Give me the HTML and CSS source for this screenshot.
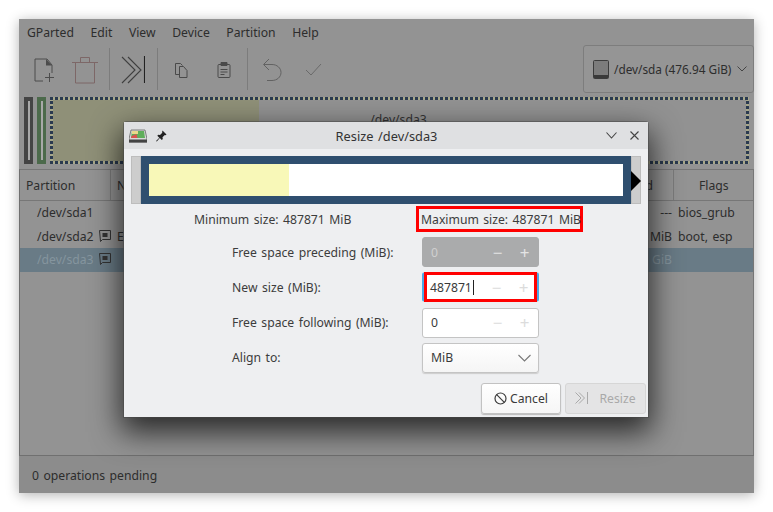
FILE: index.html
```html
<!DOCTYPE html>
<html lang="en">
<head>
<meta charset="utf-8">
<title>Resize /dev/sda3</title>
<link rel="stylesheet" href="styles.css">
</head>
<body>
<div class="window">
  <nav class="menubar">
    <span>GParted</span><span>Edit</span><span>View</span><span>Device</span><span>Partition</span><span>Help</span>
  </nav>
  <div class="toolbar">
    <div class="tools">
      <svg class="tool t-new" width="22" height="26" viewBox="0 0 22 26" fill="none" stroke="#4c4c4c" stroke-width="1"><path d="M10 24H2V2h12l5 6v8"/><path fill="#4c4c4c" stroke="none" d="M13 2l6 6.500h-6z"/><path d="M12 20.500h9M16.500 16v9"/></svg>
      <svg class="tool t-del" width="28" height="28" viewBox="0 0 28 28" fill="none" stroke="#7d6767" stroke-width="1"><path d="M1 6.500h26M9.500 6V1.500h9V6M4.500 7v20h19V7"/></svg>
      <i class="sep s1"></i>
      <svg class="tool t-res" width="24" height="28" viewBox="0 0 24 28" fill="none" stroke="#3f3f3f" stroke-width="1.100"><path d="M1 1l13 13L1 27M7 1l13 13L7 27"/><path stroke="#222" d="M23.500 0v27"/></svg>
      <i class="sep s2"></i>
      <svg class="tool t-copy" width="15" height="16" viewBox="0 0 15 16" fill="none" stroke="#4a4a4a"><path d="M5 12.500H1.500V1.500h5l2 2"/><path d="M5.500 4.500h4l3.500 4v7H5.500z"/></svg>
      <svg class="tool t-paste" width="14" height="16" viewBox="0 0 14 16" fill="none" stroke="#4a4a4a"><rect x="1" y="2.500" width="12" height="13" rx="1"/><path fill="#4a4a4a" d="M4 .5h6v3H4z"/><path d="M3.500 7.500h7M3.500 10h7M3.500 12.500h4"/></svg>
      <i class="sep s3"></i>
      <svg class="tool t-undo" width="21" height="24" viewBox="0 0 21 24" fill="none" stroke="#626262"><path d="M7 1L1.500 6.500 7 12"/><path d="M2 6.500h8c5 0 9 3.500 9 8s-4 8-9 8H5"/></svg>
      <svg class="tool t-ok" width="17" height="13" viewBox="0 0 17 13" fill="none" stroke="#6a6a6a"><path d="M1 7l5 5L16 1"/></svg>
    </div>
    <div class="device">
      <svg class="hdd" width="16" height="19" viewBox="0 0 16 19"><rect x=".5" y=".5" width="15" height="18" rx="1" fill="#7c7c7c" stroke="#3c3c3c"/><rect x="1" y="15" width="14" height="3" fill="#3a3a3a"/></svg>
      <span>/dev/sda (476.94 GiB)</span>
      <svg class="chev" width="10" height="6" viewBox="0 0 10 6" fill="none" stroke="#444"><path d="M.5.500L5 5 9.500.500"/></svg>
    </div>
  </div>
  <div class="diskmap">
    <div class="part p-a"><i></i></div>
    <div class="part p-b"><i></i></div>
    <div class="part-main">
      <div class="used"></div>
      <div class="free">/dev/sda3</div>
    </div>
  </div>
  <div class="table">
    <div class="thead">
      <div class="th c-part">Partition</div>
      <div class="th c-name">Name</div>
      <div class="th c-used">Used</div>
      <div class="th c-flags">Flags</div>
    </div>
    <div class="tr"><span class="c-part td">/dev/sda1</span><span class="c-mid"></span><span class="c-end td">---</span><span class="c-flags td">bios_grub</span></div>
    <div class="tr"><span class="c-part td">/dev/sda2 <svg class="key" width="12" height="12" viewBox="0 0 12 12"><path fill="none" stroke="#333" d="M.5.500h11v9h-8l-2 2z"/><rect x="3.500" y="3" width="5" height="4" fill="#333"/></svg></span><span class="c-mid td">EFI</span><span class="c-end td">MiB</span><span class="c-flags td">boot, esp</span></div>
    <div class="tr sel"><span class="c-part td">/dev/sda3 <svg class="key" width="12" height="12" viewBox="0 0 12 12"><path fill="none" stroke="#333" d="M.5.500h11v9h-8l-2 2z"/><rect x="3.500" y="3" width="5" height="4" fill="#333"/></svg></span><span class="c-mid"></span><span class="c-end td">GiB</span><span class="c-flags"></span></div>
  </div>
  <footer class="status">0 operations pending</footer>
</div>

<section class="dialog">
  <header class="titlebar">
    <svg class="appicon" width="18" height="14" viewBox="0 0 18 14"><path d="M2 1h14l2 9v3H0v-3z" fill="#d8d8d8" stroke="#555" stroke-width=".7"/><path d="M3 2h12l1 7H2z" fill="#5fae5a"/><path d="M3 2h6v3H3z" fill="#e9d98a"/><path d="M2.500 7l5-2 1 4H2z" fill="#d9534f"/><rect x="0" y="10.500" width="18" height="3" fill="#444"/></svg>
    <svg class="pin" width="11" height="12" viewBox="0 0 11 12"><path fill="#222" d="M6.500.5l4 4-1 .7-.7-.2L6.500 7.300l.3 1.700-1 1-2-2L.8 11.500 0 11l3.300-3.300-2-2 1-1 1.700.3 2.300-2.300-.2-.7z"/></svg>
    <h1>Resize /dev/sda3</h1>
    <svg class="wbtn" width="11" height="7" viewBox="0 0 11 7" fill="none" stroke="#444" stroke-width="1.100"><path d="M.5.500L5.500 6 10.500.500"/></svg>
    <svg class="wbtn close" width="9" height="9" viewBox="0 0 9 9" fill="none" stroke="#444" stroke-width="1.100"><path d="M.5.500l8 8M8.500.500l-8 8"/></svg>
  </header>
  <div class="dbody">
    <div class="graph">
      <div class="graph-pad"></div>
      <div class="graph-part"><div class="graph-used"></div><div class="graph-free"></div></div>
      <div class="graph-pad end"><i class="handle"></i></div>
    </div>
    <div class="sizes">
      <span class="min">Minimum size: 487871 MiB</span>
      <span class="max">Maximum size: 487871 MiB</span>
    </div>
    <div class="form">
      <label>Free space preceding (MiB):</label>
      <div class="spin disabled"><span class="val">0</span><span class="op">−</span><span class="op">+</span></div>
      <label>New size (MiB):</label>
      <div class="spin focus"><span class="val">487871<i class="caret"></i></span><span class="op">−</span><span class="op">+</span><b class="mark"></b></div>
      <label>Free space following (MiB):</label>
      <div class="spin"><span class="val">0</span><span class="op">−</span><span class="op">+</span></div>
      <label>Align to:</label>
      <div class="spin select"><span class="val">MiB</span><svg width="13" height="8" viewBox="0 0 13 8" fill="none" stroke="#777" stroke-width="1.100"><path d="M.5 1L6.500 7l6-6"/></svg></div>
    </div>
    <div class="actions">
      <button class="btn cancel"><svg width="13" height="13" viewBox="0 0 13 13" fill="none" stroke="#3c3c3c" stroke-width="1.200"><circle cx="6.500" cy="6.500" r="5.500"/><path d="M2.700 2.700l7.600 7.600"/></svg>Cancel</button>
      <button class="btn resize"><svg width="13" height="12" viewBox="0 0 13 12" fill="none" stroke="#a9a9a9"><path d="M.5.500L6 6 .5 11.500M4 .5L9.500 6 4 11.500M12.500 0v12"/></svg><span>Resize</span></button>
    </div>
  </div>
</section>
</body>
</html>
```
FILE: styles.css
```css
* { box-sizing: border-box; }
html, body { height: 100%; }
body {
  margin: 0;
  background: #fff;
  font-family: "Noto Sans", sans-serif;
  font-size: 12.2px;
  word-spacing: 1.3px;
  color: #2e2e2e;
  overflow: hidden;
  position: relative;
}
i { display: block; }

.window {
  position: absolute;
  left: 19px;
  top: 19px;
  width: 735px;
  height: 474px;
  background: #939393;
  box-shadow: 0 2px 12px rgba(0,0,0,.3);
  display: flex;
  flex-direction: column;
  color: #2d2d2d;
}
.menubar { height: 26px; display: flex; gap: 16.6px; align-items: center; padding-left: 8px; }
.toolbar { height: 47px; position: relative; display: flex; justify-content: space-between; }
.tools { position: relative; width: 400px; }
.tool { position: absolute; }
.t-new { left: 14px; top: 12px; }
.t-del { left: 52px; top: 11px; }
.t-res { left: 102px; top: 11px; }
.t-copy { left: 155px; top: 17px; }
.t-paste { left: 198px; top: 17px; }
.t-undo { left: 243px; top: 13px; }
.t-ok { left: 286px; top: 18px; }
.sep { position: absolute; top: 3px; width: 1px; height: 42px; background: #7c7c7c; }
.s1 { left: 90px; }
.s2 { left: 138px; }
.s3 { left: 228px; }
.device {
  width: 171px;
  height: 48px;
  border: 1px solid #7d7d7d;
  border-radius: 3px;
  display: flex;
  align-items: center;
  padding: 0 4px 0 9px;
  gap: 5px;
  background: #959595;
  white-space: nowrap;
  font-size: 11.8px;
  word-spacing: 0;
}
.hdd { flex: none; }
.chev { margin-left: 1px; flex: none; }

.diskmap { margin: 5px 5px 5px 5px; height: 67px; display: flex; }
.part { width: 9px; margin-right: 4px; flex: none; }
.part i { width: 2px; height: 59px; margin: 4px auto; background: #a9a9a9; }
.p-a { background: #444; }
.p-b { background: #4c6a4b; }
.part-main {
  --dash-h: repeating-linear-gradient(90deg, #2a3a50 0 3px, #a8a88a 3px 5px);
  --dash-v: repeating-linear-gradient(0deg, #2a3a50 0 3px, #a8a88a 3px 5px);
  flex: 1;
  display: flex;
  padding: 3px;
  background:
    var(--dash-h) top / 100% 3px no-repeat,
    var(--dash-h) bottom / 100% 3px no-repeat,
    var(--dash-v) left / 3px 100% no-repeat,
    var(--dash-v) right / 3px 100% no-repeat,
    #929292;
}
.used { width: 206px; background: #8f9078; }
.free { flex: 1; text-align: center; padding: 11px 208px 0 0; color: #333; }

.table { flex: 1; border-left: 1px solid #6f6f6f; border-right: 1px solid #777; border-top: 1px solid #777; }
.thead { height: 31px; display: flex; border-bottom: 1px solid #777; }
.th { display: flex; align-items: center; border-right: 1px solid #7b7b7b; }
.c-part { width: 91px; flex: none; white-space: nowrap; }
.c-name { width: 500px; flex: none; padding-left: 6px; }
.th.c-part { padding-left: 6px; }
.th.c-used { width: 63px; flex: none; justify-content: flex-end; padding-right: 20px; }
.th.c-flags { flex: 1; border-right: 0; padding-left: 25px; }
.tr { height: 23.500px; display: flex; align-items: center; }
.tr .c-part { padding-left: 17px; }
.c-mid { width: 510px; flex: none; margin-left: 6px; }
.c-end { width: 46px; flex: none; text-align: right; margin-left: -1px; white-space: nowrap; }
.c-flags { flex: 1; white-space: nowrap; }
.tr .c-flags { padding-left: 6px; }
.key { vertical-align: -1px; margin-left: 1px; }
.sel { background: #697b86; color: #85959e; }

.status {
  height: 38px;
  border-top: 1px solid #707070;
  background: #8c8c8c;
  display: flex;
  align-items: center;
  padding: 2px 0 0 13px;
}

.dialog {
  position: absolute;
  left: 124px;
  top: 122px;
  width: 524px;
  height: 295px;
  background: #eeeff1;
  border-radius: 3px 3px 0 0;
  box-shadow: 0 0 0 1px rgba(70,70,70,.5), 0 12px 30px 3px rgba(0,0,0,.72);
  display: flex;
  flex-direction: column;
}
.titlebar {
  height: 27px;
  flex: none;
  background: #dfe0e2;
  display: flex;
  align-items: center;
  padding: 0 9px 0 5px;
}
.appicon { flex: none; }
.pin { margin-left: 9px; flex: none; }
.titlebar h1 { flex: 1; margin: 0; font-size: 12.8px; font-weight: 400; text-align: center; color: #333; }
.wbtn { flex: none; }
.close { margin-left: 13px; }

.dbody { flex: 1; padding: 7px 7px 0; display: flex; flex-direction: column; }
.graph { height: 48px; flex: none; display: flex; }
.graph-pad { width: 10px; background: #cdcdcd; border: 1px solid #bdbdbd; position: relative; }
.graph-part { flex: 1; background: #2f4f6f; padding: 8px; display: flex; }
.graph-used { width: 140px; background: #f8f8b8; }
.graph-free { flex: 1; background: #fff; }
.handle {
  position: absolute;
  left: -1px;
  top: 14px;
  width: 0;
  height: 0;
  border-left: 10px solid #000;
  border-top: 10px solid transparent;
  border-bottom: 10px solid transparent;
}
.sizes { height: 28px; margin-top: 1px; display: flex; align-items: center; color: #3c3c3c; white-space: nowrap; }
.min { width: 285px; padding-left: 63px; }
.max { width: 167px; height: 26px; border: 3px solid #f00; display: flex; align-items: center; padding-left: 2px; }

.form {
  display: grid;
  grid-template-columns: 190px 117px;
  grid-auto-rows: 30px;
  row-gap: 5.300px;
  padding-left: 101px;
  margin-top: 4px;
  align-items: center;
}
.form label { color: #3c3c3c; white-space: nowrap; }
.spin {
  height: 30px;
  position: relative;
  border: 1px solid #c4c4c4;
  border-radius: 3px;
  background: #fff;
  display: flex;
  align-items: center;
  padding-left: 8px;
  color: #3a3a3a;
}
.val { flex: 1; display: flex; align-items: center; }
.op { width: 27px; text-align: center; color: #dcdcdc; font-size: 17px; line-height: 1; }
.disabled { background: #aaabac; border-color: #aaabac; color: #d0d0d0; }
.disabled .op { color: #e4e4e4; }
.focus { border-left: 2px solid #4aa8e6; border-right: 2px solid #4aa8e6; padding-left: 6px; }
.caret { width: 1px; height: 15px; background: #222; margin-left: 1px; }
.mark { position: absolute; inset: -1px 0; border: 3px solid #f00; }
.select { background: linear-gradient(#fff, #f5f5f5); box-shadow: 0 1px 1px #ccc; padding-right: 7px; }

.actions { display: flex; justify-content: flex-end; gap: 4px; margin: 10px -5px 0 0; }
.btn {
  height: 31px;
  font: inherit;
  word-spacing: inherit;
  border: 1px solid #c2c2c2;
  border-radius: 3px;
  display: flex;
  align-items: center;
  justify-content: center;
}
.cancel { width: 80px; background: linear-gradient(#fff, #f6f6f6); color: #3a3a3a; gap: 3px; box-shadow: 0 1px 1px #bbb; }
.resize { width: 81px; background: #e4e4e5; color: #a9a9a9; gap: 11px; border-color: #d6d6d6; }
```
